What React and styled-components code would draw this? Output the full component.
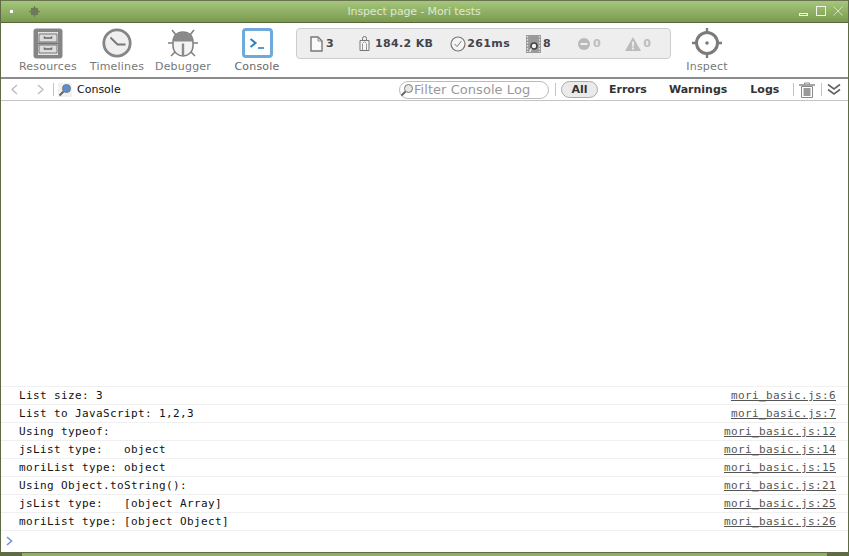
import React from 'react';
import styled, { createGlobalStyle } from 'styled-components';

const GlobalStyle = createGlobalStyle`
  html, body { margin: 0; padding: 0; background: #fff; }
  body { font-family: "DejaVu Sans", sans-serif; }
`;

const Frame = styled.div`
  width: 849px;
  height: 556px;
  box-sizing: border-box;
  display: flex;
  flex-direction: column;
  overflow: hidden;
  background: #fff;
  border-left: 1px solid #5f6b45;
  border-right: 1px solid #5f6b45;
`;

const TitleBar = styled.div`
  height: 23px;
  flex: none;
  margin: 0 -1px;
  box-sizing: border-box;
  display: flex;
  align-items: center;
  padding: 0 6px 1px 10px;
  border-top: 1px solid #6a7350;
  border-bottom: 1px solid #59663c;
  background: linear-gradient(#a4c77a, #7a9a50);
`;

const TitleDot = styled.span`
  width: 3px;
  height: 3px;
  background: #fff;
`;

const TitleSpacer = styled.span`
  margin-left: 16px;
  flex: none;
  display: flex;
`;

const TitleText = styled.span`
  flex: 1;
  text-align: center;
  color: #dfe8d0;
  font-size: 11px;
  letter-spacing: -0.12px;
  padding-right: 11px;
`;

const TitleButtons = styled.div`
  display: flex;
  align-items: center;
  gap: 7px;
`;

const Toolbar = styled.div`
  height: 56px;
  flex: none;
  box-sizing: border-box;
  display: flex;
  padding: 4px 0 0 13px;
  border-bottom: 2px solid #8c8c8c;
`;

const ToolItem = styled.div`
  width: ${(p) => p.$width}px;
  margin-left: ${(p) => p.$gap || 0}px;
  flex: none;
  display: flex;
  flex-direction: column;
  align-items: center;
  height: 50px;
`;

const ToolIcon = styled.div`
  height: 32px;
  display: flex;
  align-items: center;
  justify-content: center;
`;

const ToolLabel = styled.span`
  margin-top: 1px;
  font-size: 11px;
  letter-spacing: 0.2px;
  line-height: 13px;
  color: ${(p) => (p.$active ? '#666' : '#777')};
  white-space: nowrap;
`;

const Dashboard = styled.div`
  width: 375px;
  height: 31px;
  margin: 1px 0 0 8px;
  box-sizing: border-box;
  flex: none;
  display: flex;
  align-items: center;
  border: 1px solid #ccc;
  border-radius: 4px;
  background: #eee;
`;

const Metric = styled.div`
  display: flex;
  align-items: center;
  flex: none;
  gap: ${(p) => p.$gap ?? 3}px;
  margin-left: ${(p) => p.$left}px;
  font-size: 11px;
  font-weight: bold;
  color: ${(p) => (p.$muted ? '#bdbdbd' : '#44444c')};
  letter-spacing: 0.35px;
`;

const NavBar = styled.div`
  height: 22px;
  flex: none;
  box-sizing: border-box;
  display: flex;
  align-items: center;
  border-bottom: 1px solid #c4c4c4;
  padding-left: 10px;
`;

const NavArrows = styled.div`
  display: flex;
  align-items: center;
  gap: 19px;
`;

const Divider = styled.span`
  width: 1px;
  height: 13px;
  flex: none;
  background: #c4c4c4;
  margin: ${(p) => p.$margin};
`;

const Crumb = styled.div`
  width: 14px;
  height: 14px;
  flex: none;
  display: flex;
  background: #f1f1f1;
`;

const CrumbText = styled.span`
  margin-left: 5px;
  font-size: 11px;
  color: #111;
  width: 322px;
  flex: none;
`;

const Filter = styled.div`
  width: 150px;
  height: 18px;
  flex: none;
  box-sizing: border-box;
  display: flex;
  align-items: center;
  border: 1px solid #bbb;
  border-radius: 9px;
  font-size: 13px;
  color: #999;
  white-space: nowrap;
  letter-spacing: 0.05px;
`;

const Scope = styled.span`
  flex: none;
  font-size: 11px;
  font-weight: bold;
  color: #333;
  line-height: 15px;
  margin-left: ${(p) => p.$left}px;
  ${(p) =>
    p.$active &&
    `
    box-sizing: border-box;
    width: 37px;
    height: 17px;
    text-align: center;
    border: 1px solid #aaa;
    border-radius: 9px;
    background: #eaeaea;
  `}
`;

const Empty = styled.div`
  flex: 1;
  min-height: 0;
`;

const LogRow = styled.div`
  height: 18px;
  box-sizing: border-box;
  display: flex;
  align-items: center;
  justify-content: space-between;
  padding: 0 12px 0 18px;
  border-top: 1px solid #f0f0f0;
  font-family: "DejaVu Sans Mono", monospace;
  font-size: 11px;
  letter-spacing: 0.38px;
  color: #111;
  white-space: pre;
`;

const LogLink = styled.span`
  color: #555;
  text-decoration: underline;
`;

const Prompt = styled.div`
  height: 22px;
  flex: none;
  box-sizing: border-box;
  display: flex;
  align-items: center;
  padding: 0 0 1px 5px;
  border-top: 1px solid #f0f0f0;
`;

const BottomEdge = styled.div`
  height: 4px;
  flex: none;
  margin: 0 -1px;
  box-sizing: border-box;
  padding: 1px 22px 0;
  background: #5f6b45;
`;

const BottomGrip = styled.div`
  height: 3px;
  background: #8fb060;
`;

const rows = [
  ['List size: 3', 'mori_basic.js:6'],
  ['List to JavaScript: 1,2,3', 'mori_basic.js:7'],
  ['Using typeof:', 'mori_basic.js:12'],
  ['jsList type:   object', 'mori_basic.js:14'],
  ['moriList type: object', 'mori_basic.js:15'],
  ['Using Object.toString():', 'mori_basic.js:21'],
  ['jsList type:   [object Array]', 'mori_basic.js:25'],
  ['moriList type: [object Object]', 'mori_basic.js:26'],
];

const ResourcesIcon = () => (
  <svg width="30" height="31" viewBox="0 0 30 31">
    <rect x="0.5" y="0.5" width="29" height="30" rx="3" fill="#858585" />
    <rect x="5" y="4" width="20" height="23" fill="#e4e4e4" />
    <path d="M5 15.5h20" stroke="#777" strokeWidth="2" />
    <path d="M6 6h18v8H6zM6 17h18v8H6z" fill="#dcdcdc" stroke="#777" />
    <path d="M11.5 8.5v1.5h7V8.5M11.5 19.5V21h7v-1.5" fill="none" stroke="#666" strokeWidth="1.5" />
  </svg>
);

const TimelinesIcon = () => (
  <svg width="30" height="30" viewBox="0 0 30 30">
    <circle cx="15" cy="15" r="13.2" fill="#efefef" stroke="#858585" strokeWidth="2.8" />
    <path d="M8.5 9.5l7 7h8" fill="none" stroke="#777" strokeWidth="1.8" />
  </svg>
);

const DebuggerIcon = () => (
  <svg width="30" height="30" viewBox="0 0 30 30">
    <path d="M8 7L4 2M22 7l4-5M5 15H0M25 15h5M7 24l-4 4M23 24l4 4" stroke="#808080" strokeWidth="1.6" fill="none" />
    <path d="M15 4C9 4 5 8 5 14v4c0 6 5 10 10 10s10-4 10-10v-4c0-6-4-10-10-10z" fill="#f4f4f4" stroke="#808080" strokeWidth="1.5" />
    <path d="M5.5 13.5C5.5 8 10 4.5 15 4.5S24.5 8 24.5 13.5z" fill="#8a8a8a" />
    <path d="M13.8 15.5h2.4V27.5h-2.4z" fill="#8a8a8a" />
  </svg>
);

const ConsoleIcon = () => (
  <svg width="31" height="30" viewBox="0 0 31 30">
    <rect x="1.5" y="1.5" width="28" height="27" rx="2.5" fill="#fff" stroke="#6faadc" strokeWidth="3" />
    <path d="M8.5 11l5 4-5 4" fill="none" stroke="#2f7fc4" strokeWidth="2" />
    <path d="M16 20h6" stroke="#2f7fc4" strokeWidth="1.6" />
  </svg>
);

const InspectIcon = () => (
  <svg width="30" height="30" viewBox="0 0 30 30">
    <circle cx="15" cy="15" r="10.5" fill="#fff" stroke="#7b7b7b" strokeWidth="3" />
    <path d="M15 0v6M15 24v6M0 15h6M24 15h6" stroke="#7b7b7b" strokeWidth="2.4" />
    <circle cx="15" cy="15" r="1.8" fill="#7b7b7b" />
  </svg>
);

const PageIcon = () => (
  <svg width="13" height="16" viewBox="0 0 13 16">
    <path d="M1 1h7l4 4v10H1z" fill="#fafafa" stroke="#777" strokeWidth="1.4" />
    <path d="M8 1v4h4" fill="none" stroke="#888" />
  </svg>
);

const WeightIcon = () => (
  <svg width="11" height="15" viewBox="0 0 11 15">
    <path d="M1 4.5h9v10H1z" fill="#f6f6f6" stroke="#777" />
    <path d="M3.5 14V8M7.5 14V8M3.5 7.5l2-2 2 2" fill="none" stroke="#999" />
    <path d="M3.5 4.5V2.5a2 2 0 0 1 4 0v2" fill="none" stroke="#777" />
  </svg>
);

const ClockIcon = () => (
  <svg width="16" height="16" viewBox="0 0 16 16">
    <circle cx="8" cy="8" r="7" fill="#f5f5f5" stroke="#777" strokeWidth="1.2" />
    <path d="M4.5 8l2.5 2.5L11.5 5" fill="none" stroke="#777" />
  </svg>
);

const FilmIcon = () => (
  <svg width="15" height="18" viewBox="0 0 15 18">
    <rect width="15" height="18" fill="#9a9a9a" />
    <path d="M1.5 1v16M13.5 1v16" stroke="#e4e4e4" strokeWidth="1.2" strokeDasharray="1.5 1.5" />
    <circle cx="8" cy="11" r="3" fill="#f2f2f2" stroke="#444" strokeWidth="1.6" />
    <path d="M5.5 13.5L3.5 17" stroke="#f0f0f0" strokeWidth="1.5" />
  </svg>
);

const ErrorIcon = () => (
  <svg width="12" height="12" viewBox="0 0 12 12">
    <circle cx="6" cy="6" r="6" fill="#b9b9b9" />
    <rect x="2.5" y="5" width="7" height="2" fill="#efefef" />
  </svg>
);

const WarnIcon = () => (
  <svg width="16" height="14" viewBox="0 0 16 14">
    <path d="M8 0l8 14H0z" fill="#bcbcbc" />
    <path d="M8 4.5v5M8 10.5v2" stroke="#efefef" strokeWidth="1.8" />
  </svg>
);

const Chevron = ({ flip }) => (
  <svg width="7" height="11" viewBox="0 0 7 11">
    <path d={flip ? 'M1 1l5 4.5L1 10' : 'M6 1L1 5.5 6 10'} fill="none" stroke="#bbb" strokeWidth="1.3" />
  </svg>
);

const Magnifier = ({ tone }) => (
  <svg width="14" height="14" viewBox="0 0 14 14">
    <path d="M1.5 12.5l4-4" stroke="#666" strokeWidth="2" />
    <circle cx="8.5" cy="5.5" r="4" fill={tone} stroke="#777" />
  </svg>
);

const TrashIcon = () => (
  <svg width="16" height="16" viewBox="0 0 16 16">
    <path d="M0 3h16" stroke="#888" strokeWidth="1.5" />
    <path d="M5.5 2.5V1h5v1.5" fill="none" stroke="#888" />
    <path d="M2.5 4.5h11V15.5h-11z" fill="#fff" stroke="#888" />
    <rect x="4.5" y="6" width="7" height="8" fill="#999" />
  </svg>
);

const DoubleChevron = () => (
  <svg width="14" height="13" viewBox="0 0 14 13">
    <path d="M1 1.5l6 4.5 6-4.5M1 6.5l6 4.5 6-4.5" fill="none" stroke="#666" strokeWidth="1.6" />
  </svg>
);

const BugGlyph = () => (
  <svg width="11" height="11" viewBox="0 0 11 11">
    <circle cx="5.5" cy="5.5" r="4" fill="#6d7a5c" />
    <path d="M0 5.5h11M5.5 0v11M2 2l7 7M9 2L2 9" stroke="#6d7a5c" />
  </svg>
);

const WindowButtons = () => (
  <TitleButtons>
    <svg width="10" height="9" viewBox="0 0 10 9">
      <rect x="0.5" y="6.5" width="8" height="2" fill="none" stroke="#f2f5ea" />
    </svg>
    <svg width="10" height="10" viewBox="0 0 10 10">
      <rect x="0.5" y="0.5" width="9" height="9" fill="none" stroke="#f2f5ea" />
    </svg>
    <svg width="10" height="10" viewBox="0 0 10 10">
      <path d="M0.5 0.5l9 9M9.5 0.5l-9 9" stroke="#e6ecd8" strokeWidth="0.8" />
    </svg>
  </TitleButtons>
);

export default function App() {
  return (
    <>
      <GlobalStyle />
      <Frame>
        <TitleBar>
          <TitleDot />
          <TitleSpacer>
            <BugGlyph />
          </TitleSpacer>
          <TitleText>Inspect page - Mori tests</TitleText>
          <WindowButtons />
        </TitleBar>
        <Toolbar>
          <ToolItem $width={68}>
            <ToolIcon><ResourcesIcon /></ToolIcon>
            <ToolLabel>Resources</ToolLabel>
          </ToolItem>
          <ToolItem $width={70}>
            <ToolIcon><TimelinesIcon /></ToolIcon>
            <ToolLabel>Timelines</ToolLabel>
          </ToolItem>
          <ToolItem $width={62}>
            <ToolIcon><DebuggerIcon /></ToolIcon>
            <ToolLabel>Debugger</ToolLabel>
          </ToolItem>
          <ToolItem $width={62} $gap={12}>
            <ToolIcon><ConsoleIcon /></ToolIcon>
            <ToolLabel $active>Console</ToolLabel>
          </ToolItem>
          <Dashboard>
            <Metric $left={13} $gap={3}><PageIcon />3</Metric>
            <Metric $left={25} $gap={5}><WeightIcon />184.2 KB</Metric>
            <Metric $left={17} $gap={1}><ClockIcon />261ms</Metric>
            <Metric $left={16} $gap={2}><FilmIcon />8</Metric>
            <Metric $left={27} $muted><ErrorIcon />0</Metric>
            <Metric $left={24} $gap={2} $muted><WarnIcon />0</Metric>
          </Dashboard>
          <ToolItem $width={72}>
            <ToolIcon><InspectIcon /></ToolIcon>
            <ToolLabel>Inspect</ToolLabel>
          </ToolItem>
        </Toolbar>
        <NavBar>
          <NavArrows>
            <Chevron />
            <Chevron flip />
          </NavArrows>
          <Divider $margin="0 4px 0 9px" />
          <Crumb><Magnifier tone="#5b8fd0" /></Crumb>
          <CrumbText>Console</CrumbText>
          <Filter>
            <Magnifier tone="#e8e8e8" />
            Filter Console Log
          </Filter>
          <Divider $margin="0 5px 0 6px" />
          <Scope $active>All</Scope>
          <Scope $left={11}>Errors</Scope>
          <Scope $left={22}>Warnings</Scope>
          <Scope $left={23}>Logs</Scope>
          <Divider $margin="0 5px 0 14px" />
          <TrashIcon />
          <Divider $margin="0 5px 0 6px" />
          <DoubleChevron />
        </NavBar>
        <Empty />
        {rows.map(([text, link]) => (
          <LogRow key={link}>
            <span>{text}</span>
            <LogLink>{link}</LogLink>
          </LogRow>
        ))}
        <Prompt>
          <svg width="7" height="10" viewBox="0 0 7 10">
            <path d="M1 1l4.5 4L1 9" fill="none" stroke="#6f97d8" strokeWidth="1.6" />
          </svg>
        </Prompt>
        <BottomEdge>
          <BottomGrip />
        </BottomEdge>
      </Frame>
    </>
  );
}
